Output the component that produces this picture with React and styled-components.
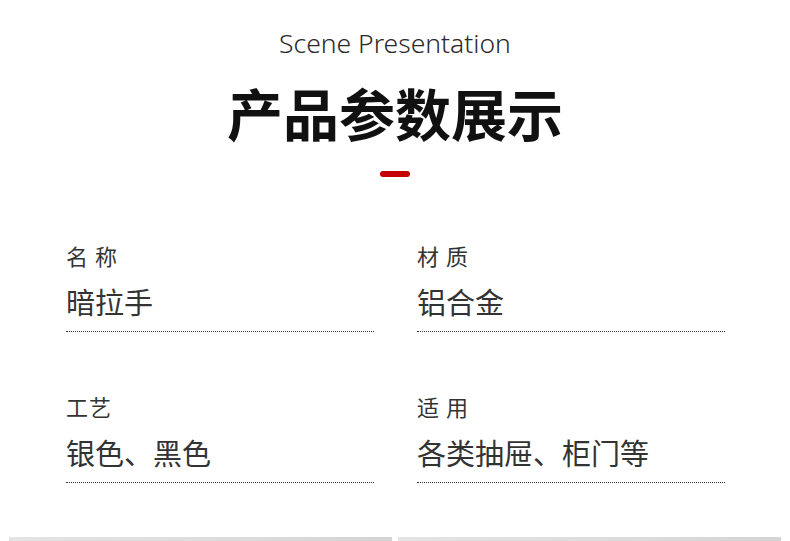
import React from "react";
import styled, { createGlobalStyle } from "styled-components";

const Global = createGlobalStyle`
  html, body { margin: 0; padding: 0; background: #ffffff; }
  body { font-family: "Noto Sans CJK SC", "Noto Sans", sans-serif; }
`;

const Page = styled.div`
  width: 790px;
  height: 541px;
  overflow: hidden;
  display: flex;
  flex-direction: column;
  align-items: center;
  padding-top: 28px;
  box-sizing: border-box;
`;

const Eyebrow = styled.div`
  font-family: "Noto Sans", "Noto Sans CJK SC", sans-serif;
  font-weight: 300;
  font-size: 26.5px;
  line-height: 30px;
  color: #2a2a2a;
`;

const Title = styled.h1`
  margin: 22px 0 0;
  font-family: "Noto Sans CJK SC", sans-serif;
  font-weight: 700;
  font-size: 56px;
  line-height: 64px;
  color: #111111;
`;

const Accent = styled.div`
  margin-top: 27px;
  width: 30px;
  height: 6px;
  border-radius: 3px;
  background: #c40000;
`;

const Grid = styled.div`
  margin-top: 66px;
  width: 659px;
  align-self: flex-start;
  margin-left: 66px;
  display: grid;
  grid-template-columns: 308px 308px;
  column-gap: 43px;
  row-gap: 62px;
`;

const Cell = styled.div`
  display: flex;
  flex-direction: column;
  padding-bottom: 13px;
  border-bottom: 1px dotted #333333;
`;

const Label = styled.div`
  font-size: 22px;
  line-height: 24px;
  letter-spacing: 1px;
  color: #333333;
`;

const Value = styled.div`
  margin-top: 18px;
  font-size: 29px;
  line-height: 33px;
  color: #333333;
`;

const Footer = styled.div`
  margin-top: auto;
  width: 772px;
  display: flex;
  gap: 6px;
  margin-left: 9px;
  align-self: flex-start;
`;

const Bar = styled.div`
  flex: 1;
  height: 4px;
  background: linear-gradient(90deg, #e4e4e4 0%, #dcdcdc 60%, #d4d4d4 100%);
`;

const specs = [
  { label: "名 称", value: "暗拉手" },
  { label: "材 质", value: "铝合金" },
  { label: "工艺", value: "银色、黑色" },
  { label: "适 用", value: "各类抽屉、柜门等" },
];

export default function App() {
  return (
    <>
      <Global />
      <Page>
        <Eyebrow>Scene Presentation</Eyebrow>
        <Title>产品参数展示</Title>
        <Accent />
        <Grid>
          {specs.map((s) => (
            <Cell key={s.label}>
              <Label>{s.label}</Label>
              <Value>{s.value}</Value>
            </Cell>
          ))}
        </Grid>
        <Footer>
          <Bar />
          <Bar />
        </Footer>
      </Page>
    </>
  );
}
